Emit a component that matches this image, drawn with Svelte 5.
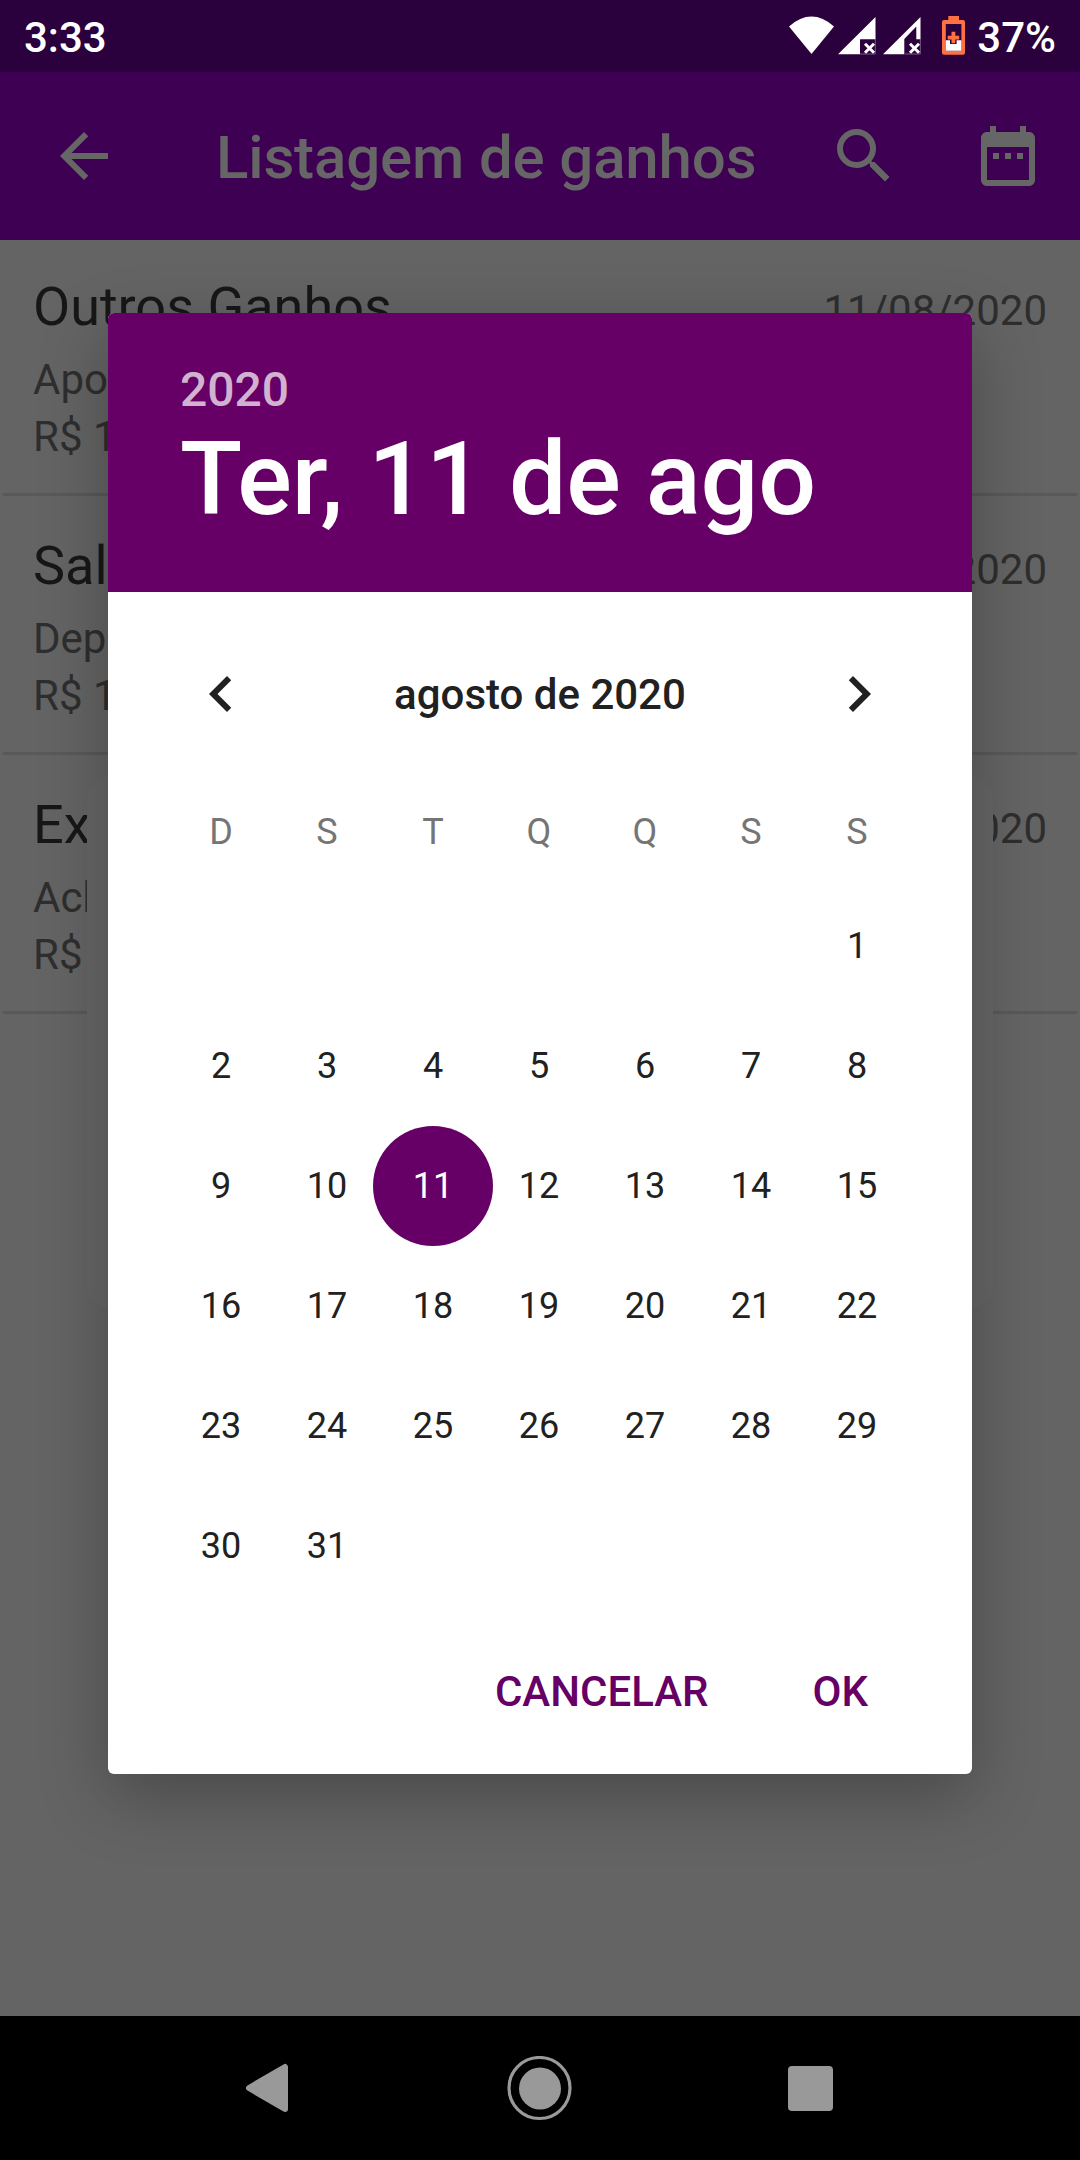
<script>
  const items = [
    { title: 'Outros Ganhos', note: 'Apo', value: 'R$ 1', date: '11/08/2020' },
    { title: 'Sal', note: 'Dep', value: 'R$ 1', date: '11/08/2020' },
    { title: 'Ex', note: 'Ach', value: 'R$', date: '2020' }
  ];
  const weekdays = ['D', 'S', 'T', 'Q', 'Q', 'S', 'S'];
  const firstColumn = 6;
  const selected = 11;
  const cells = [...Array(firstColumn).fill(null), ...Array.from({ length: 31 }, (_, i) => i + 1)];
</script>

<div class="screen">
  <header class="status">
    <span class="clock">3:33</span>
    <svg class="status-icons" width="140" height="44" viewBox="0 0 140 44">
      <path d="M0 12.500Q22.500 -7.300 45 12.500L22.500 40Z" fill="#fff" />
      <path d="M49 40.300L86.500 3V25.300H71V40.300Z" fill="#fff" />
      <path d="M71 40H86.300V25" fill="none" stroke="#8a7594" stroke-width=".8" />
      <path d="M76 29.800L85 38.800M85 29.800L76 38.800" stroke="#fff" stroke-width="3" />
      <path d="M94 40.300L131.500 3V25.300H127.300V12.500L115.300 25V40.300Z" fill="#fff" />
      <path d="M116 40H131.300V25" fill="none" stroke="#8a7594" stroke-width=".8" />
      <path d="M121 29.800L130 38.800M130 29.800L121 38.800" stroke="#fff" stroke-width="3" />
    </svg>
    <svg class="battery" width="24" height="40" viewBox="0 0 24 40">
      <path d="M6.300 0H17V4H21Q23 4 23 6V36.700Q23 38.700 21 38.700H2Q0 38.700 0 36.700V6Q0 4 2 4H6.300Z" fill="#ff7043" />
      <path d="M3.800 8H19.400V34.700H3.800Z" fill="#2a003d" />
      <path d="M3.800 24.300H8V28H14.600V24.300H19.400V34.700H3.800Z" fill="#fff" />
      <path d="M9.500 15.700H13.300V19.700H17.200V23.400H13.300V27.200H9.500V23.400H5.700V19.700H9.500Z" fill="#ff7043" />
    </svg>
    <span class="percent">37%</span>
  </header>

  <nav class="appbar">
    <svg class="back" width="72" height="72" viewBox="0 0 24 24"><path d="M20 11H7.830l5.590-5.590L12 4l-8 8 8 8 1.410-1.410L7.830 13H20z" /></svg>
    <h1>Listagem de ganhos</h1>
    <svg class="search" width="72" height="72" viewBox="0 0 24 24"><path d="M15.500 14h-.79l-.28-.27A6.471 6.471 0 0 0 16 9.500 6.500 6.500 0 1 0 9.500 16c1.610 0 3.090-.59 4.230-1.570l.27.280v.79l5 4.990L20.490 19l-4.990-5zm-6 0C7.010 14 5 11.990 5 9.500S7.010 5 9.500 5 14 7.010 14 9.500 11.990 14 9.500 14z" /></svg>
    <svg class="calendar" width="72" height="72" viewBox="0 0 24 24"><path d="M9 11H7v2h2v-2zm4 0h-2v2h2v-2zm4 0h-2v2h2v-2zm2-7h-1V2h-2v2H8V2H6v2H5c-1.110 0-2 .9-2 2v14c0 1.100.89 2 2 2h14c1.100 0 2-.9 2-2V6c0-1.100-.9-2-2-2zm0 16H5V9h14v11z" /></svg>
  </nav>

  <main>
    {#each items as item}
      <article>
        <div class="row"><h2>{item.title}</h2><time>{item.date}</time></div>
        <p>{item.note}</p>
        <p class="value">{item.value}</p>
      </article>
    {/each}
  </main>

  <footer>
    <svg width="44" height="52" viewBox="0 0 44 52"><path d="M40 5V47L4 26Z" fill="#999" stroke="#999" stroke-width="6" stroke-linejoin="round" /></svg>
    <svg class="home" width="65" height="65" viewBox="0 0 65 65"><circle cx="32.500" cy="32" r="30.500" fill="none" stroke="#999" stroke-width="3.200" /><circle cx="33" cy="32.500" r="21" fill="#999" /></svg>
    <span class="recent"></span>
  </footer>

  <div class="under"></div>
  <section class="dialog">
    <div class="head">
      <div class="year">2020</div>
      <div class="date">Ter, 11 de ago</div>
    </div>
    <div class="month">
      <svg width="72" height="72" viewBox="0 0 24 24"><path d="M15.410 7.410L14 6l-6 6 6 6 1.410-1.410L10.830 12z" /></svg>
      <span>agosto de 2020</span>
      <svg width="72" height="72" viewBox="0 0 24 24"><path d="M8.590 16.590L13.170 12 8.590 7.410 10 6l6 6-6 6z" /></svg>
    </div>
    <div class="grid weekdays">
      {#each weekdays as d}<span>{d}</span>{/each}
    </div>
    <div class="grid days">
      {#each cells as day}
        <span class:selected={day === selected}>{day ?? ''}</span>
      {/each}
    </div>
    <div class="actions"><button>CANCELAR</button><button>OK</button></div>
  </section>
</div>

<style>
  .screen {
    position: relative;
    width: 1080px;
    height: 2160px;
    overflow: hidden;
    display: flex;
    flex-direction: column;
    background: #646464;
    font-family: Roboto, sans-serif;
  }
  h1, h2, p { margin: 0; font-weight: 400; }
  svg { display: block; flex: none; }
  .status {
    box-sizing: border-box;
    height: 72px;
    padding: 0 24px;
    display: flex;
    align-items: center;
    background: #2a003d;
    color: #fff;
    font-size: 42px;
    font-weight: 500;
    white-space: nowrap;
  }
  .clock { flex: 1; padding-top: 3px; }
  .status-icons { margin-right: 13px; }
  .battery { margin-right: 11px; }
  .percent { padding-top: 3px; }
  .appbar {
    box-sizing: border-box;
    height: 168px;
    padding: 0 36px 0 48px;
    display: flex;
    align-items: center;
    background: #3e0052;
    color: #666;
    fill: #666;
  }
  h1 { flex: 1; padding: 4px 0 0 96px; font-size: 60px; font-weight: 500; line-height: 72px; letter-spacing: -0.15px; white-space: nowrap; }
  .search { margin-right: 72px; }
  main { flex: 1; }
  article {
    box-sizing: border-box;
    height: 256px;
    margin: 0 3px 3px;
    padding: 35px 30px 0;
    border-bottom: 3px solid #595959;
    color: #2e2e2e;
    font-size: 42px;
  }
  .row { display: flex; justify-content: space-between; align-items: baseline; line-height: 64px; }
  h2 { font-size: 54px; color: #171717; }
  p { line-height: 57px; margin-top: 8px; }
  .value { margin-top: 0; }
  footer {
    height: 144px;
    display: flex;
    align-items: center;
    background: #000;
    padding-left: 245px;
  }
  .home { margin-left: 218px; }
  .recent { width: 45px; height: 45px; margin-left: 216px; border-radius: 4px; background: #999; }
  .under {
    position: absolute;
    left: 87px;
    top: 775px;
    width: 906px;
    height: 534px;
    border-radius: 24px;
    background: #666;
  }
  .dialog {
    position: absolute;
    left: 108px;
    top: 313px;
    width: 864px;
    height: 1461px;
    border-radius: 6px;
    overflow: hidden;
    background: #fff;
    color: #212121;
    box-shadow: 0 22px 68px rgba(0, 0, 0, 0.28);
  }
  .head { box-sizing: border-box; height: 279px; padding: 49px 72px 0; background: #660066; font-weight: 500; }
  .year { font-size: 48px; line-height: 56px; color: #d1b2d1; }
  .date { padding-top: 1px; font-size: 102px; line-height: 120px; letter-spacing: -0.2px; color: #fff; white-space: nowrap; }
  .month {
    height: 72px;
    margin: 66px 77px 0;
    display: flex;
    align-items: center;
    justify-content: space-between;
    font-size: 42px;
    font-weight: 500;
    fill: #212121;
  }
  .grid { display: grid; grid-template-columns: repeat(7, 106px); margin: 0 60px; text-align: center; font-size: 36px; }
  .weekdays { height: 114px; margin-top: 42px; line-height: 120px; color: #757575; }
  .days { grid-auto-rows: 120px; line-height: 120px; }
  .selected { width: 120px; margin-left: -7px; border-radius: 50%; background: #660066; color: #fff; }
  .actions { display: flex; justify-content: flex-end; gap: 104px; margin-top: 61px; padding-right: 104px; }
  button { border: 0; padding: 0; background: none; font: 500 42px/50px Roboto, sans-serif; color: #660066; }
</style>
